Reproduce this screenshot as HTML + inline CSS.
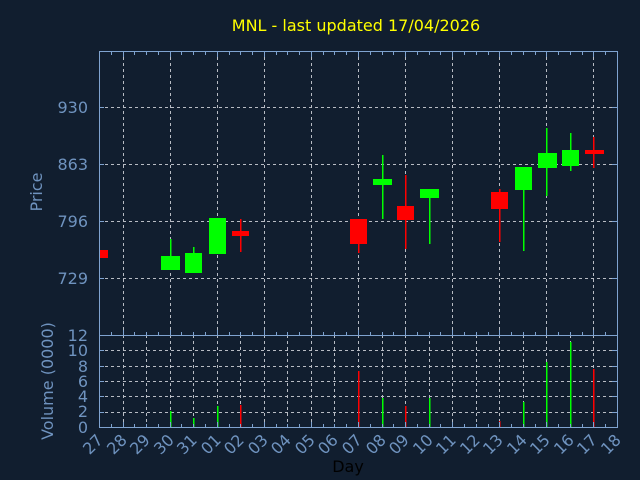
<!DOCTYPE html>
<html><head><meta charset="utf-8"><style>
html,body{margin:0;padding:0;background:#111e2f;width:640px;height:480px;overflow:hidden}
svg{display:block}
text{font-family:"DejaVu Sans","Liberation Sans",sans-serif}
</style></head><body>
<svg id="s" width="640" height="480" xmlns="http://www.w3.org/2000/svg">
<rect width="640" height="480" fill="#111e2f"/>
<g id="grid" stroke="#b8bcc4" stroke-width="1" stroke-dasharray="3,3" fill="none"></g>
<g id="candles"></g>
<g id="axes" stroke="#7fa3d0" stroke-width="1" fill="none"></g>
<text x="356" y="31" fill="#ffff00" font-size="16" text-anchor="middle">MNL - last updated 17/04/2026</text>
<g fill="#6f93bf" font-size="16" text-anchor="end">
<text x="88" y="113">930</text>
<text x="88" y="170">863</text>
<text x="88" y="227">796</text>
<text x="88" y="284">729</text>
<text x="88" y="341">12</text>
<text x="88" y="356">10</text>
<text x="88" y="372">8</text>
<text x="88" y="387">6</text>
<text x="88" y="402">4</text>
<text x="88" y="417">2</text>
<text x="88" y="433">0</text>
</g>
<text transform="translate(42,192) rotate(-90)" fill="#6f93bf" font-size="16" text-anchor="middle">Price</text>
<text transform="translate(53,381) rotate(-90)" fill="#6f93bf" font-size="16" text-anchor="middle">Volume (0000)</text>
<text x="348" y="472" fill="#000000" font-size="16" text-anchor="middle">Day</text>
<g fill="#6f93bf" font-size="16" text-anchor="end">
<text transform="translate(104,441) rotate(-45)">27</text>
<text transform="translate(128,441) rotate(-45)">28</text>
<text transform="translate(151,441) rotate(-45)">29</text>
<text transform="translate(175,441) rotate(-45)">30</text>
<text transform="translate(198,441) rotate(-45)">31</text>
<text transform="translate(222,441) rotate(-45)">01</text>
<text transform="translate(245,441) rotate(-45)">02</text>
<text transform="translate(269,441) rotate(-45)">03</text>
<text transform="translate(292,441) rotate(-45)">04</text>
<text transform="translate(316,441) rotate(-45)">05</text>
<text transform="translate(339,441) rotate(-45)">06</text>
<text transform="translate(363,441) rotate(-45)">07</text>
<text transform="translate(387,441) rotate(-45)">08</text>
<text transform="translate(410,441) rotate(-45)">09</text>
<text transform="translate(434,441) rotate(-45)">10</text>
<text transform="translate(457,441) rotate(-45)">11</text>
<text transform="translate(481,441) rotate(-45)">12</text>
<text transform="translate(504,441) rotate(-45)">13</text>
<text transform="translate(528,441) rotate(-45)">14</text>
<text transform="translate(551,441) rotate(-45)">15</text>
<text transform="translate(575,441) rotate(-45)">16</text>
<text transform="translate(598,441) rotate(-45)">17</text>
<text transform="translate(622,441) rotate(-45)">18</text>
</g>
</svg>
<script>
var NS="http://www.w3.org/2000/svg";
function el(p,t,a){var e=document.createElementNS(NS,t);for(var k in a)e.setAttribute(k,a[k]);document.getElementById(p).appendChild(e);return e;}
var L=99,R=617,T=51,M=335,B=427,D=(R-L)/22;
function X(i){return L+D*i;}
[107,164,221,278].forEach(function(y){el('grid','line',{x1:L,x2:R,y1:y+.5,y2:y+.5});});
for(var i=1;i<22;i+=2){var x=Math.round(X(i))+.5;el('grid','line',{x1:x,x2:x,y1:T,y2:M});}
for(var v=2;v<12;v+=2){var y=Math.round(B-v*(B-M)/12)+.5;el('grid','line',{x1:L,x2:R,y1:y,y2:y});}
for(var i=1;i<22;i++){var x=Math.round(X(i))+.5;el('grid','line',{x1:x,x2:x,y1:M,y2:B});}
var G="#00ff00",Rd="#ff0000";
var c=[
[0,Rd,99,108,250,258,250,258],
[3,G,161,180,256,270,239,270],
[4,G,185,202,253,273,247,273],
[5,G,209,226,218,254,218,254],
[6,Rd,232,249,231,236,219,252],
[11,Rd,350,367,219,244,219,253],
[12,G,373,392,179,185,155,219],
[13,Rd,397,414,206,220,175,249],
[14,G,420,439,189,198,189,244],
[17,Rd,491,508,192,209,189,242],
[18,G,515,532,167,190,167,251],
[19,G,538,557,153,168,128,196],
[20,G,562,579,150,166,133,171],
[21,Rd,585,604,150,154,137,168]];
c.forEach(function(k){var x=Math.round(X(k[0]));
el('candles','rect',{x:x,y:k[6],width:1.5,height:k[7]-k[6],fill:k[1]});
el('candles','rect',{x:k[2],y:k[4],width:k[3]-k[2],height:k[5]-k[4],fill:k[1]});});
var vb=[[3,G,411],[4,G,418],[5,G,406],[6,Rd,405],[11,Rd,371],[12,G,398],[13,Rd,406],[14,G,398],[17,Rd,421],[18,G,402],[19,G,362],[20,G,342],[21,Rd,369]];
vb.forEach(function(k){var x=Math.round(X(k[0]));el('candles','rect',{x:x,y:k[2],width:1.5,height:B-k[2],fill:k[1]});});
el('axes','line',{x1:L+.5,x2:L+.5,y1:T,y2:B+.5});
el('axes','line',{x1:R+.5,x2:R+.5,y1:T,y2:B+.5});
el('axes','line',{x1:L,x2:R+1,y1:T+.5,y2:T+.5});
el('axes','line',{x1:L,x2:R+1,y1:M+.5,y2:M+.5});
el('axes','line',{x1:L,x2:R+1,y1:B+.5,y2:B+.5});
for(var j=1;j<44;j++){var x=Math.round(L+D*j/2)+.5;var maj=(j%4==2);var h=maj?5:3;
el('axes','line',{x1:x,x2:x,y1:T+1,y2:T+1+h});
el('axes','line',{x1:x,x2:x,y1:M,y2:M-h});
el('axes','line',{x1:x,x2:x,y1:B,y2:B-h});}
[107,164,221,278].forEach(function(y){el('axes','line',{x1:L,x2:L+5,y1:y+.5,y2:y+.5});el('axes','line',{x1:R-5,x2:R,y1:y+.5,y2:y+.5});});
for(var v=2;v<12;v+=2){var y=Math.round(B-v*(B-M)/12)+.5;el('axes','line',{x1:L,x2:L+5,y1:y,y2:y});el('axes','line',{x1:R-5,x2:R,y1:y,y2:y});}
</script>
</body></html>
